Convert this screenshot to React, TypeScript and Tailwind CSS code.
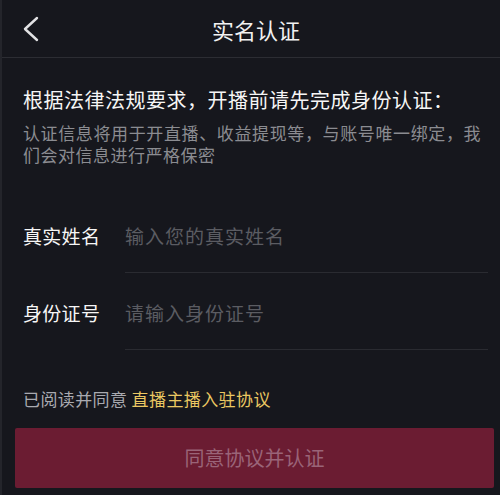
import React from 'react';

const font = { fontFamily: '"Noto Sans CJK SC", "Noto Sans", sans-serif' };

function Header() {
  return (
    <div className="grid h-[58px] grid-cols-[60px_1fr_50px] items-center border-b border-[#2c2d33]">
      <div className="flex h-full items-center pl-[20px]">
        <svg width="20" height="26" viewBox="0 0 20 26" fill="none">
          <polyline
            points="15,2 3,13 15,24"
            stroke="#e2e2e4"
            strokeWidth="2.4"
            strokeLinecap="round"
            strokeLinejoin="round"
          />
        </svg>
      </div>
      <h1 className="text-center text-[22px] leading-[30px] text-[#f2f2f2]">实名认证</h1>
      <div />
    </div>
  );
}

function FieldRow({ label, placeholder }: { label: string; placeholder: string }) {
  return (
    <div className="flex pl-[23px] pr-[12px]">
      <div className="w-[102px] shrink-0 pt-[26px] pb-[22px] text-[19px] leading-[28px] tracking-[0.3px] text-[#f6f6f6]">
        {label}
      </div>
      <div className="flex-1 border-b border-[#2a2b31] pt-[26px] pb-[22px]">
        <input
          className="w-full bg-transparent text-[19px] leading-[28px] tracking-[1px] text-[#f0f0f0] outline-none placeholder:text-[#5b5c62]"
          style={font}
          placeholder={placeholder}
        />
      </div>
    </div>
  );
}

export default function App() {
  return (
    <div
      className="h-[495px] w-[500px] overflow-hidden border-l-2 border-[#24252b] bg-[#16171d]"
      style={font}
    >
      <Header />
      <div className="pl-[21px] pr-[19px]">
        <p className="mt-[28px] text-[20px] leading-[28px] tracking-[0.5px] text-[#f6f6f6]">
          根据法律法规要求，开播前请先完成身份认证：
        </p>
        <p className="mt-[8px] text-justify text-[17px] leading-[22px] tracking-[0.5px] text-[#8b8c91]">
          认证信息将用于开直播、收益提现等，与账号唯一绑定，我们会对信息进行严格保密
        </p>
      </div>
      <div className="mt-[30px] -ml-[2px]">
        <FieldRow label="真实姓名" placeholder="输入您的真实姓名" />
        <FieldRow label="身份证号" placeholder="请输入身份证号" />
      </div>
      <p className="mt-[37px] pl-[21px] text-[17px] leading-[24px] tracking-[0.4px] text-[#a9aab0]">
        已阅读并同意 <span className="text-[#ebc862]">直播主播入驻协议</span>
      </p>
      <button
        className="mt-[17px] ml-[13px] flex h-[60px] w-[479px] items-center justify-center rounded-[2px] bg-[#6b1c32] text-[20px] text-[#9a6478]"
        style={font}
      >
        同意协议并认证
      </button>
    </div>
  );
}
